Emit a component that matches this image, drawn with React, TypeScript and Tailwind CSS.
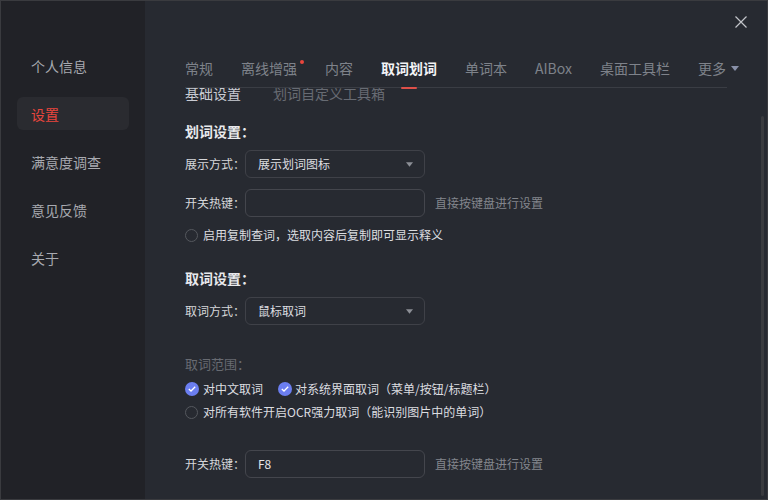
import React from "react";

const font = { fontFamily: '"Noto Sans CJK SC", "Noto Sans", sans-serif' };

const menu = ["个人信息", "设置", "满意度调查", "意见反馈", "关于"];
const tabs = ["常规", "离线增强", "内容", "取词划词", "单词本", "AIBox", "桌面工具栏"];

function Caret({ className }: { className?: string }) {
    return (
        <svg width="8" height="5" viewBox="0 0 8 5" className={className}>
            <path d="M0 0 H8 L4 5 Z" fill="currentColor" />
        </svg>
    );
}

function Radio() {
    return <span className="w-[13px] h-[13px] rounded-full border border-[#55585e] shrink-0" />;
}

function Checked() {
    return (
        <span className="w-[14px] h-[14px] rounded-full bg-[#6b7ef0] flex items-center justify-center shrink-0">
            <svg width="8" height="6" viewBox="0 0 8 6">
                <path d="M0.8 3 L3 5 L7.2 0.8" stroke="#fff" strokeWidth="1.3" fill="none" />
            </svg>
        </span>
    );
}

function Select({ value }: { value: string }) {
    return (
        <div className="w-[180px] h-[28px] rounded-md border border-[#3f4148] flex items-center justify-between pl-[12px] pr-[11px] text-[12px] text-[#dcdde0]">
            <span>{value}</span>
            <Caret className="text-[#8c8f96] w-[7px]" />
        </div>
    );
}

function HotkeyRow({ value }: { value?: string }) {
    return (
        <div className="flex items-center h-[28px]">
            <span className="w-[60px] text-[12px] text-[#d6d7da]">开关热键：</span>
            <div className="w-[180px] h-[28px] rounded-md border border-[#44464d] flex items-center pl-[12px] text-[12px] text-[#e4e5e8]">
                {value}
            </div>
            <span className="ml-[10px] text-[12px] text-[#83868d]">直接按键盘进行设置</span>
        </div>
    );
}

export default function App() {
    return (
        <div
            style={font}
            className="w-[768px] h-[500px] border border-[#3a3b3f] flex bg-[#272a31] overflow-hidden leading-5 whitespace-nowrap"
        >
            {/* sidebar */}
            <div className="w-[144px] shrink-0 bg-[#212227] pt-[48px] flex flex-col gap-[15px]">
                {menu.map((m) => (
                    <div
                        key={m}
                        className={
                            m === "设置"
                                ? "ml-[16px] w-[112px] h-[33px] rounded-md bg-[#2a2b30] flex items-center pl-[14px] text-[14px] text-[#ea463d]"
                                : "ml-[16px] w-[112px] h-[33px] flex items-center pl-[14px] text-[14px] text-[#a8aab0]"
                        }
                    >
                        {m}
                    </div>
                ))}
            </div>

            {/* main */}
            <div className="flex-1 relative flex flex-col min-w-0">
                <div className="h-[41px] flex justify-end items-center pr-[20px] shrink-0">
                    <svg width="12" height="12" viewBox="0 0 12 12">
                        <path d="M0.5 0.5 L11.5 11.5 M11.5 0.5 L0.5 11.5" stroke="#c3c5ca" strokeWidth="1.2" />
                    </svg>
                </div>

                <div className="mx-[40px] h-[46px] border-b border-[#3a3d44] flex items-end pb-[9px] gap-[28px] shrink-0">
                    {tabs.map((t) => (
                        <div key={t} className="relative shrink-0">
                            <span
                                className={
                                    t === "取词划词"
                                        ? "text-[14px] font-bold text-[#f2f3f5]"
                                        : "text-[14px] text-[#7e828a]"
                                }
                            >
                                {t}
                            </span>
                            {t === "离线增强" && (
                                <span className="absolute -right-[7px] top-[3px] w-[4px] h-[4px] rounded-full bg-[#ea463d]" />
                            )}
                            {t === "取词划词" && (
                                <span className="absolute left-[20px] -bottom-[11px] w-[16px] h-[2px] rounded-full bg-[#de5049]" />
                            )}
                        </div>
                    ))}
                    <div className="flex items-center gap-[5px] text-[14px] text-[#7e828a] shrink-0">
                        <span>更多</span>
                        <Caret className="text-[#8890a8]" />
                    </div>
                </div>

                <div className="flex-1 overflow-hidden">
                    <div className="-mt-[5px] pl-[40px] flex flex-col">
                        <div className="flex gap-[32px] h-5 text-[14px]">
                            <span className="text-[#c9ccd3]">基础设置</span>
                            <span className="text-[#676b73]">划词自定义工具箱</span>
                        </div>

                        <div className="mt-[18px] text-[14px] font-bold text-[#e8e9ec]">划词设置：</div>

                        <div className="mt-[9px] flex items-center">
                            <span className="w-[60px] text-[12px] text-[#d6d7da]">展示方式：</span>
                            <Select value="展示划词图标" />
                        </div>

                        <div className="mt-[11px]">
                            <HotkeyRow />
                        </div>

                        <div className="mt-[8px] flex items-center gap-[5px] text-[12px] text-[#dcdde0]">
                            <Radio />
                            <span>启用复制查词，选取内容后复制即可显示释义</span>
                        </div>

                        <div className="mt-[23px] text-[14px] font-bold text-[#e8e9ec]">取词设置：</div>

                        <div className="mt-[9px] flex items-center">
                            <span className="w-[60px] text-[12px] text-[#d6d7da]">取词方式：</span>
                            <Select value="鼠标取词" />
                        </div>

                        <div className="mt-[29px] text-[13px] text-[#686b72]">取词范围：</div>

                        <div className="mt-[5px] flex items-center text-[12px] text-[#dcdde0]">
                            <Checked />
                            <span className="ml-[4px]">对中文取词</span>
                            <span className="ml-[15px]">
                                <Checked />
                            </span>
                            <span className="ml-[3px]">对系统界面取词（菜单/按钮/标题栏）</span>
                        </div>

                        <div className="mt-[3px] flex items-center gap-[5px] text-[12px] text-[#dcdde0]">
                            <Radio />
                            <span>对所有软件开启OCR强力取词（能识别图片中的单词）</span>
                        </div>

                        <div className="mt-[28px]">
                            <HotkeyRow value="F8" />
                        </div>
                    </div>
                </div>

                {/* scrollbar */}
                <div className="absolute right-[3px] top-[115px] w-[3px] h-[380px] rounded-full bg-[#3a3b3f]" />
            </div>
        </div>
    );
}
